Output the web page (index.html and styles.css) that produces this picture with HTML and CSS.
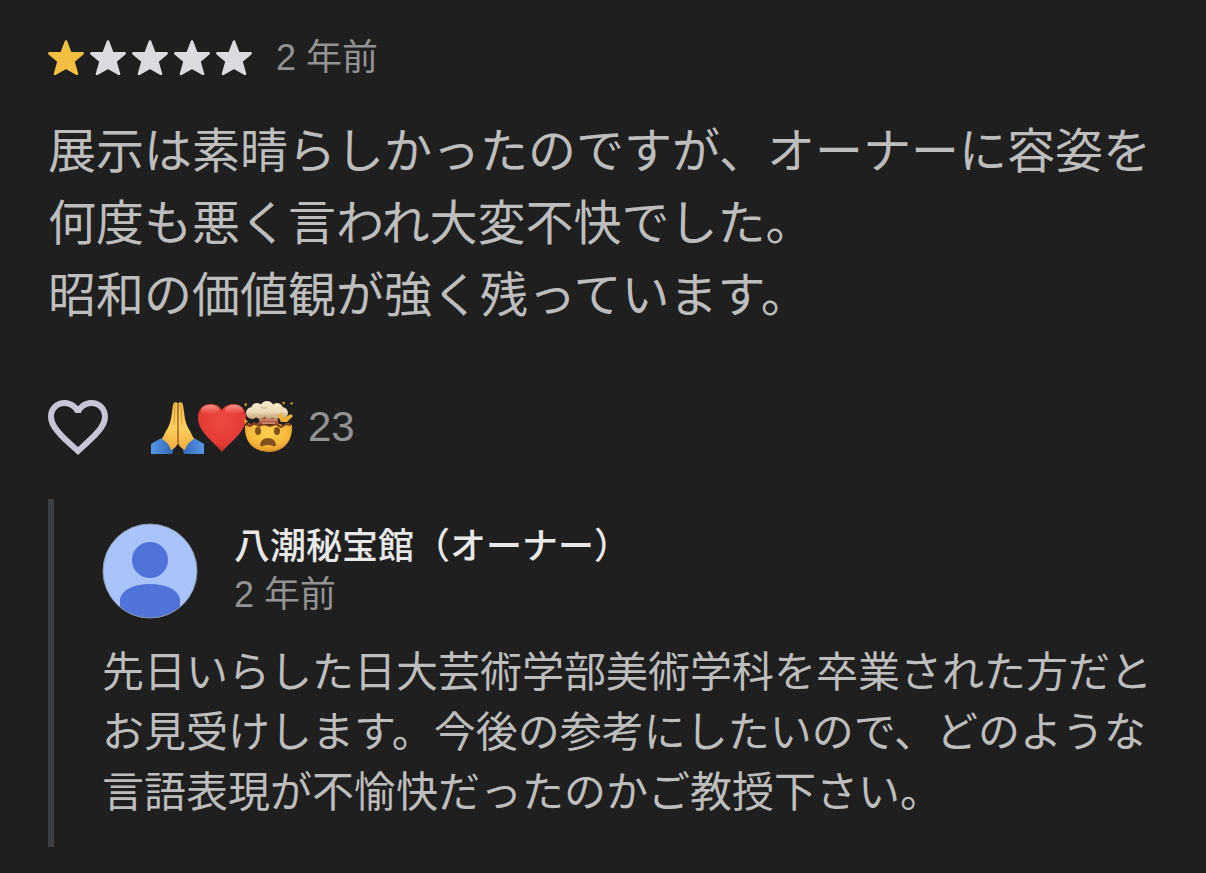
FILE: index.html
```
<!DOCTYPE html>
<html lang="ja">
<head>
    <meta charset="UTF-8">
    <meta name="viewport" content="width=device-width, initial-scale=1.0">
    <title>クチコミ</title>
    <link rel="stylesheet" href="styles.css">
</head>
<body>
    <svg class="defs" aria-hidden="true">
        <symbol id="star" viewBox="0 0 36 36">
            <path d="M18 1.500L22.300 13L34.600 13.400L25.300 21.200L29 33.800L18 27.600L7 33.800L10.700 21.200L1.400 13.400L13.700 13Z" fill="currentColor" stroke="currentColor" stroke-width="2.600" stroke-linejoin="round"/>
        </symbol>
    </svg>
    <article class="review">
        <div class="meta">
            <div class="stars" role="img" aria-label="5 つ星のうち 1">
                <svg class="star filled"><use href="#star"/></svg>
                <svg class="star"><use href="#star"/></svg>
                <svg class="star"><use href="#star"/></svg>
                <svg class="star"><use href="#star"/></svg>
                <svg class="star"><use href="#star"/></svg>
            </div>
            <span class="date">2 年前</span>
        </div>
        <p class="review-text">展示は素晴らしかったのですが、オーナーに容姿を何度も悪く言われ大変不快でした。<br>昭和の価値観が強く残っています。</p>
        <div class="reactions">
            <button class="like" type="button" aria-label="いいね">
                <svg viewBox="2 2 20 20"><path fill="currentColor" d="M16.5 3c-1.74 0-3.41.81-4.5 2.09C10.91 3.81 9.24 3 7.5 3 4.42 3 2 5.42 2 8.5c0 3.78 3.4 6.86 8.55 11.54L12 21.35l1.45-1.32C18.6 15.36 22 12.28 22 8.5 22 5.42 19.58 3 16.5 3zm-4.4 15.55l-.1.1-.1-.1C7.14 14.24 4 11.39 4 8.5 4 6.5 5.5 5 7.5 5c1.54 0 3.04.99 3.57 2.36h1.87C13.46 5.99 14.96 5 16.5 5c2 0 3.5 1.5 3.5 3.5 0 2.89-3.14 5.74-7.9 10.05z"/></svg>
            </button>
            <button class="summary" type="button" aria-label="リアクション 23 件">
                <span class="emojis">
                    <!-- folded hands -->
                    <svg class="emoji" viewBox="0 -1 54 54">
                        <defs>
                            <linearGradient id="skin" x1="0" y1="0" x2="0" y2="1">
                                <stop offset="0" stop-color="#f3bb4c"/>
                                <stop offset=".5" stop-color="#ffd060"/>
                                <stop offset="1" stop-color="#f0ac38"/>
                            </linearGradient>
                            <linearGradient id="sleeve-left" x1="0" y1="0" x2="1" y2="0">
                                <stop offset="0" stop-color="#5a97e6"/>
                                <stop offset="1" stop-color="#2f66b4"/>
                            </linearGradient>
                            <linearGradient id="sleeve-right" x1="1" y1="0" x2="0" y2="0">
                                <stop offset="0" stop-color="#5a97e6"/>
                                <stop offset="1" stop-color="#2f66b4"/>
                            </linearGradient>
                        </defs>
                        <path d="M1 43Q7 39 14 36L24 47Q23 50 22 53H1Z" fill="url(#sleeve-left)"/>
                        <path d="M54 43Q48 39 42 36L32 47Q33 50 34 53H54Z" fill="url(#sleeve-right)"/>
                        <path d="M28 3C27 0 23 1 23 4L21 18C20 23 18 27 16 30L12 38Q19 42 21 49C25 47 28 44 28 41Z" fill="url(#skin)"/>
                        <path d="M28 3C29 0 33 1 33 4L35 18C36 23 38 27 40 30L44 38Q37 42 35 49C31 47 28 44 28 41Z" fill="url(#skin)"/>
                        <path d="M25 3L24 24M31 3L32 24" stroke="#d79a3a" stroke-width="1" fill="none"/>
                        <path d="M28 3V42" stroke="#8a5a1c" stroke-width="1.300"/>
                    </svg>
                    <!-- red heart -->
                    <svg class="emoji" viewBox="0 -1 54 54">
                        <defs>
                            <radialGradient id="red" cx=".5" cy=".35" r=".7">
                                <stop offset="0" stop-color="#ee4a42"/>
                                <stop offset=".7" stop-color="#e23a35"/>
                                <stop offset="1" stop-color="#b92523"/>
                            </radialGradient>
                            <linearGradient id="shine" x1="0" y1="0" x2="0" y2="1">
                                <stop offset="0" stop-color="#ffb0a8" stop-opacity=".8"/>
                                <stop offset="1" stop-color="#ff7a70" stop-opacity="0"/>
                            </linearGradient>
                        </defs>
                        <path d="M26 9C21 0 2 0 2 17C2 31 18 41 26 51C34 41 50 31 50 17C50 0 31 0 26 9Z" fill="url(#red)"/>
                        <ellipse cx="14" cy="9" rx="9" ry="5" fill="url(#shine)"/>
                        <ellipse cx="38" cy="9" rx="9" ry="5" fill="url(#shine)"/>
                    </svg>
                    <!-- exploding head -->
                    <svg class="emoji" viewBox="0 -1 54 54">
                        <defs>
                            <radialGradient id="face" cx=".5" cy=".35" r=".65">
                                <stop offset="0" stop-color="#ffd34d"/>
                                <stop offset=".7" stop-color="#f5b538"/>
                                <stop offset="1" stop-color="#d88a25"/>
                            </radialGradient>
                            <linearGradient id="cloud" gradientUnits="userSpaceOnUse" x1="0" y1="0" x2="0" y2="18">
                                <stop offset="0" stop-color="#f8ecd2"/>
                                <stop offset=".6" stop-color="#ecd9b6"/>
                                <stop offset="1" stop-color="#c3a37b"/>
                            </linearGradient>
                        </defs>
                        <path d="M3 25L7 22L10 25L14 22L18 24H34L38 23L42 25L46 22L50 24C51 41 41 51 27 51C12 51 2 41 3 25Z" fill="url(#face)"/>
                        <path d="M4 23L8 25L12 22L17 25L22 23L28 25L34 23L39 26L44 23L49 24" stroke="#7a3c1c" stroke-width="2" fill="none"/>
                        <path d="M19 15H34L37 23H16Z" fill="#a9543a"/>
                        <path d="M17 19H36M20 22H33" stroke="#e3b793" stroke-width="1"/>
                        <g fill="url(#cloud)">
                            <circle cx="10" cy="12" r="6"/>
                            <circle cx="15" cy="8" r="6"/>
                            <circle cx="25" cy="7" r="7"/>
                            <circle cx="35" cy="8" r="6"/>
                            <circle cx="40" cy="12" r="6"/>
                            <circle cx="18" cy="13" r="5"/>
                            <circle cx="27" cy="13" r="5"/>
                            <circle cx="34" cy="13" r="5"/>
                        </g>
                        <path d="M12 14Q16 17 20 14M23 14Q27 18 31 14M33 13Q37 16 41 12M19 6Q22 9 25 6" stroke="#c9ad83" stroke-width="1" fill="none"/>
                        <path d="M36 15L39 12L42 17L49 13L51 15L45 21L39 21Z" fill="#f0b034"/>
                        <path d="M2 3L5 2L4 6ZM40 1L43 1L42 4ZM48 2L51 1L50 4ZM2 18L6 20L3 23Z" fill="#eda62d"/>
                        <ellipse cx="16" cy="30" rx="3" ry="4" fill="#80501f"/>
                        <ellipse cx="35" cy="30" rx="3" ry="4" fill="#80501f"/>
                        <path d="M18 44Q19 37 26 37Q33 37 34 44Q34 46 31 45Q26 43 21 45Q18 46 18 44Z" fill="#80501f"/>
                    </svg>
                </span>
                <span class="count">23</span>
            </button>
        </div>
        <section class="reply">
            <header class="reply-header">
                <svg class="avatar" viewBox="0 0 96 96" aria-hidden="true">
                    <defs>
                        <clipPath id="round"><circle cx="48" cy="48" r="47"/></clipPath>
                    </defs>
                    <circle cx="48" cy="48" r="47" fill="#a8c4fa"/>
                    <circle cx="48" cy="37" r="18" fill="#4f73d8"/>
                    <path clip-path="url(#round)" d="M18 96V76C20 66 34 61 48 61C62 61 76 66 78 76V96Z" fill="#4f73d8"/>
                    <circle cx="48" cy="48" r="47" fill="none" stroke="#8c96ab" stroke-width="1"/>
                </svg>
                <div class="author">
                    <h2 class="name">八潮秘宝館（オーナー）</h2>
                    <span class="date">2 年前</span>
                </div>
            </header>
            <p class="reply-text">先日いらした日大芸術学部美術学科を卒業された方だとお見受けします。今後の参考にしたいので、どのような言語表現が不愉快だったのかご教授下さい。</p>
        </section>
    </article>
</body>
</html>
```
FILE: styles.css
```
* {
    box-sizing: border-box;
}
body {
    margin: 0;
    background: #1f1f1f;
    color: #bdbdbd;
    font-family: "Liberation Sans", "Noto Sans CJK JP", sans-serif;
}
button {
    display: flex;
    align-items: center;
    padding: 0;
    border: none;
    background: none;
    color: inherit;
    font: inherit;
    cursor: pointer;
}
.defs {
    position: absolute;
    width: 0;
    height: 0;
}
.review {
    padding: 34px 48px 24px;
}
.meta {
    display: flex;
    align-items: center;
    gap: 24px;
}
.stars {
    display: flex;
    gap: 6px;
}
.star {
    width: 36px;
    height: 36px;
    color: #dadbdf;
}
.star.filled {
    color: #f3bf42;
}
.date {
    color: #939393;
    font-size: 36px;
    line-height: 48px;
}
.review-text {
    margin: 34px 0 65px;
    font-size: 48px;
    line-height: 72px;
}
.reactions {
    display: flex;
    align-items: center;
    gap: 42px;
}
.like {
    color: #c6c6d8;
}
.like svg {
    width: 60px;
    height: 60px;
}
.summary {
    gap: 12px;
}
.emojis {
    display: flex;
}
.emoji {
    width: 54px;
    height: 54px;
}
.emoji + .emoji {
    margin-left: -8px;
}
.count {
    color: #939393;
    font-size: 42px;
    line-height: 60px;
}
.reply {
    margin-top: 42px;
    padding: 24px 0 24px 48px;
    border-left: 6px solid #3c4043;
}
.reply-header {
    display: flex;
    align-items: center;
    gap: 36px;
}
.avatar {
    width: 96px;
    height: 96px;
}
.author {
    display: flex;
    flex-direction: column;
}
.name {
    margin: 0;
    color: #e8e8e8;
    font-size: 36px;
    font-weight: 500;
    line-height: 48px;
}
.reply-text {
    margin: 24px 0 0;
    font-size: 42px;
    line-height: 60px;
}
```
